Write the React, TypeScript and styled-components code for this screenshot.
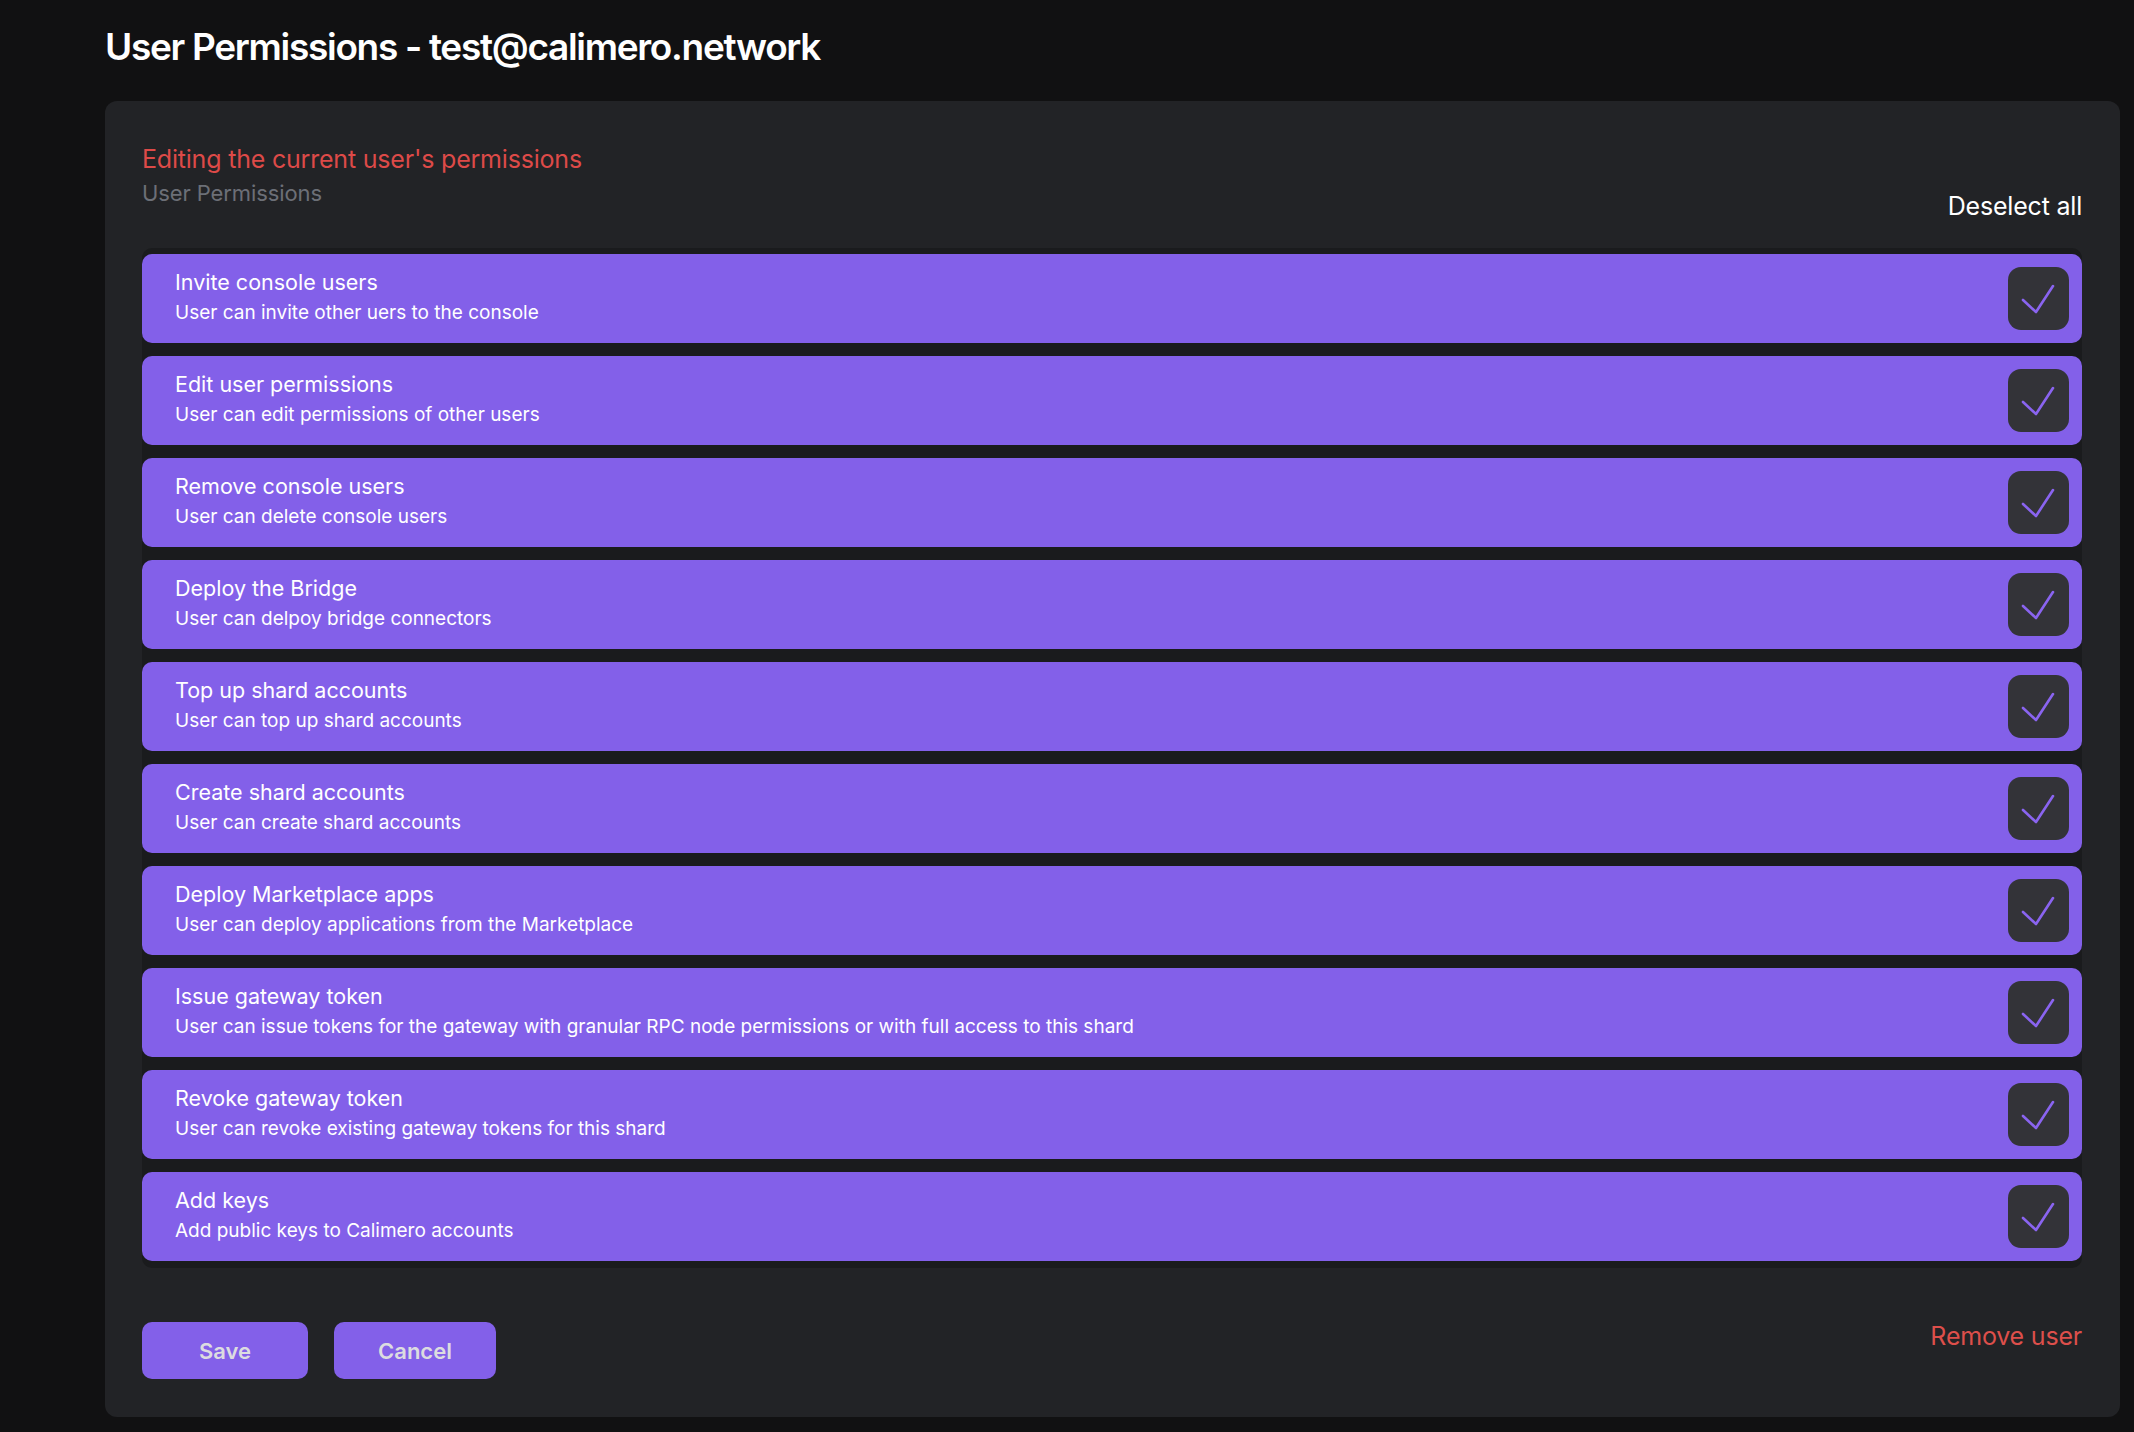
import React, { useState } from 'react';
import styled, { createGlobalStyle } from 'styled-components';

/* ── Data ── */

const PERMISSIONS = [
  { title: 'Invite console users', desc: 'User can invite other uers to the console' },
  { title: 'Edit user permissions', desc: 'User can edit permissions of other users' },
  { title: 'Remove console users', desc: 'User can delete console users' },
  { title: 'Deploy the Bridge', desc: 'User can delpoy bridge connectors' },
  { title: 'Top up shard accounts', desc: 'User can top up shard accounts' },
  { title: 'Create shard accounts', desc: 'User can create shard accounts' },
  { title: 'Deploy Marketplace apps', desc: 'User can deploy applications from the Marketplace' },
  {
    title: 'Issue gateway token',
    desc: 'User can issue tokens for the gateway with granular RPC node permissions or with full access to this shard',
  },
  { title: 'Revoke gateway token', desc: 'User can revoke existing gateway tokens for this shard' },
  { title: 'Add keys', desc: 'Add public keys to Calimero accounts' },
];

/* ── Styles ── */

const GlobalStyle = createGlobalStyle`
  html, body {
    margin: 0;
    padding: 0;
    background: #111112;
  }
  body {
    font-family: Inter, 'Noto Sans', sans-serif;
    color: #fff;
  }
`;

const Page = styled.div`
  min-height: 1432px;
  box-sizing: border-box;
  padding: 24px 14px 14px 105px;
  background: #111112;
`;

const PageTitle = styled.h1`
  margin: 0 0 31px 0;
  font-size: 37px;
  line-height: 46px;
  font-weight: 600;
  letter-spacing: -1.3px;
  color: #fff;
`;

const Card = styled.section`
  background: #222326;
  border-radius: 12px;
  padding: 44px 38px 38px 37px;
`;

const CardHeader = styled.div`
  display: flex;
  justify-content: space-between;
  align-items: flex-end;
`;

const HeaderText = styled.div`
  display: flex;
  flex-direction: column;
  padding-bottom: 15px;
`;

const Warning = styled.div`
  font-size: 25px;
  line-height: 29px;
  color: #dd4a48;
  letter-spacing: -0.2px;
  margin-bottom: 7px;
`;

const Subtitle = styled.div`
  font-size: 22px;
  line-height: 25px;
  color: #6c6f77;
  letter-spacing: -0.1px;
`;

const LinkButton = styled.button<{ $danger?: boolean }>`
  background: none;
  border: none;
  padding: 0;
  font-family: inherit;
  font-size: 25px;
  line-height: 29px;
  letter-spacing: -0.2px;
  color: ${(p) => (p.$danger ? '#dd4f4b' : '#ffffff')};
  cursor: pointer;
`;

const List = styled.div`
  margin-top: 27px;
  display: flex;
  flex-direction: column;
  gap: 13px;
  padding: 6px 0 7px 0;
  background: #1a1b1d;
  border-radius: 10px;
`;

const Row = styled.label`
  display: flex;
  align-items: center;
  justify-content: space-between;
  height: 89px;
  box-sizing: border-box;
  padding: 0 13px 0 33px;
  background: #8360e9;
  border-radius: 10px;
  cursor: pointer;
`;

const RowText = styled.div`
  display: flex;
  flex-direction: column;
  gap: 7px;
  padding-bottom: 5px;
`;

const RowTitle = styled.span`
  font-size: 21.5px;
  line-height: 26px;
  color: #fff;
`;

const RowDesc = styled.span`
  font-size: 19px;
  line-height: 22px;
  color: #fff;
`;

const CheckBox = styled.span`
  display: flex;
  align-items: center;
  justify-content: center;
  width: 61px;
  height: 63px;
  border-radius: 13px;
  background: #333338;
`;

const Footer = styled.div`
  margin-top: 54px;
  display: flex;
  justify-content: space-between;
  align-items: flex-start;
`;

const Actions = styled.div`
  display: flex;
  gap: 26px;
`;

const ActionButton = styled.button<{ $width: number }>`
  width: ${(p) => p.$width}px;
  height: 57px;
  border: none;
  border-radius: 10px;
  background: #8360e9;
  color: #dcdce0;
  font-family: inherit;
  font-size: 22px;
  font-weight: 600;
  cursor: pointer;
`;

/* ── Components ── */

const CheckIcon = () => (
  <svg width="61" height="63" viewBox="0 0 61 63">
    <polyline
      points="15,33 28,45 45,19"
      fill="none"
      stroke="#8a64f0"
      strokeWidth="2.6"
      strokeLinecap="round"
      strokeLinejoin="round"
    />
  </svg>
);

export default function App() {
  const [checked, setChecked] = useState<boolean[]>(PERMISSIONS.map(() => true));

  return (
    <Page>
      <GlobalStyle />
      <PageTitle>User Permissions - test@calimero.network</PageTitle>
      <Card>
        <CardHeader>
          <HeaderText>
            <Warning>Editing the current user's permissions</Warning>
            <Subtitle>User Permissions</Subtitle>
          </HeaderText>
          <LinkButton onClick={() => setChecked(PERMISSIONS.map(() => false))}>Deselect all</LinkButton>
        </CardHeader>

        <List>
          {PERMISSIONS.map((p, i) => (
            <Row
              key={p.title}
              onClick={() => setChecked((c) => c.map((v, j) => (j === i ? !v : v)))}
            >
              <RowText>
                <RowTitle>{p.title}</RowTitle>
                <RowDesc>{p.desc}</RowDesc>
              </RowText>
              <CheckBox>{checked[i] && <CheckIcon />}</CheckBox>
            </Row>
          ))}
        </List>

        <Footer>
          <Actions>
            <ActionButton $width={166}>Save</ActionButton>
            <ActionButton $width={162}>Cancel</ActionButton>
          </Actions>
          <LinkButton $danger>Remove user</LinkButton>
        </Footer>
      </Card>
    </Page>
  );
}
